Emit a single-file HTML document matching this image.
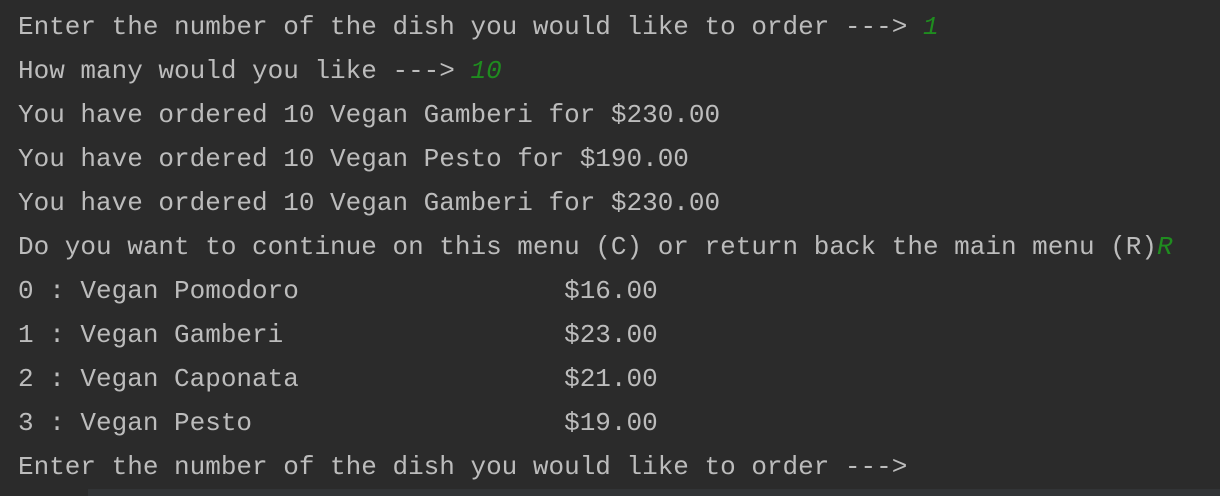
<!DOCTYPE html>
<html><head><meta charset="utf-8"><style>
html,body{margin:0;padding:0;background:#2b2b2b;width:1220px;height:496px;overflow:hidden}
pre{margin:0;position:absolute;left:18px;top:5px;font-family:"Liberation Mono",monospace;font-size:26px;line-height:44px;color:#bcbcbc;letter-spacing:0}
i{color:#1f8c1f;font-style:italic}
.sb{position:absolute;left:0;top:489px;width:1220px;height:7px;background:#2b2b2b}
.sb2{position:absolute;left:88px;top:489px;width:1132px;height:7px;background:#323436}
</style></head><body>
<pre>Enter the number of the dish you would like to order ---&gt; <i>1</i>
How many would you like ---&gt; <i>10</i>
You have ordered 10 Vegan Gamberi for $230.00
You have ordered 10 Vegan Pesto for $190.00
You have ordered 10 Vegan Gamberi for $230.00
Do you want to continue on this menu (C) or return back the main menu (R)<i>R</i>
0 : Vegan Pomodoro                 $16.00
1 : Vegan Gamberi                  $23.00
2 : Vegan Caponata                 $21.00
3 : Vegan Pesto                    $19.00
Enter the number of the dish you would like to order ---&gt;</pre>
<div class="sb"></div><div class="sb2"></div>
</body></html>
